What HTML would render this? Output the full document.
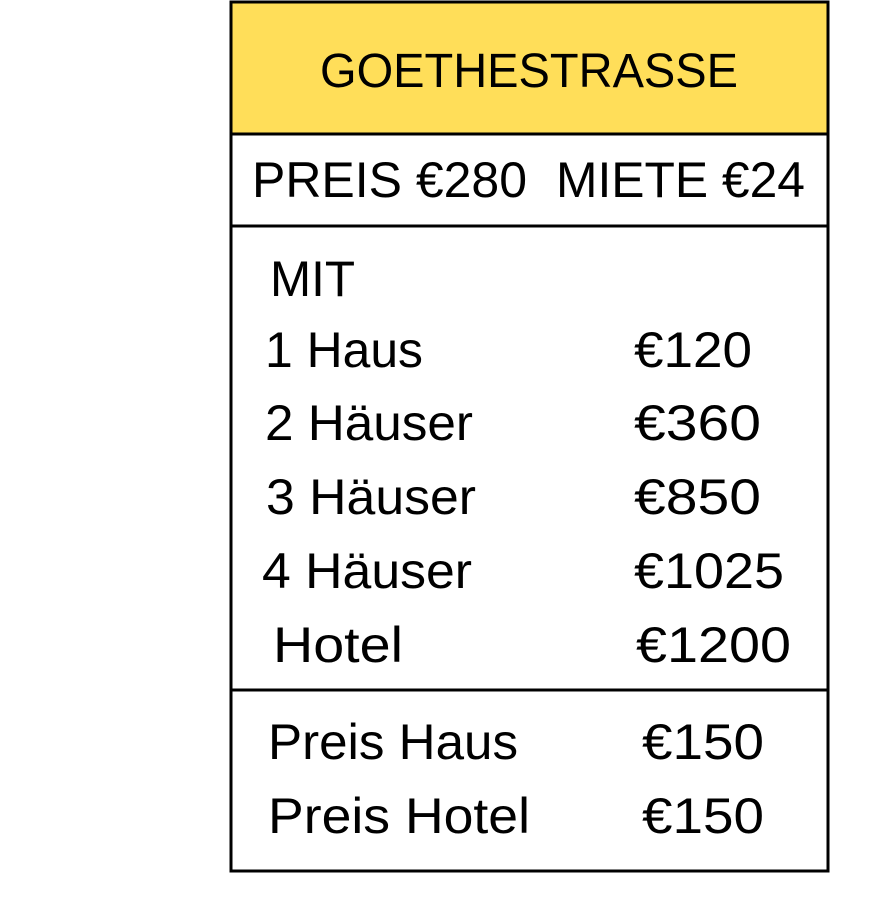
<!DOCTYPE html>
<html><head><style>
html,body{margin:0;padding:0;background:#fff;width:875px;height:919px;overflow:hidden}
svg{display:block}
text{font-family:"Liberation Sans",sans-serif;fill:#000}
</style></head><body>
<svg width="875" height="919" viewBox="0 0 875 919">
<rect x="231" y="2" width="597" height="131" fill="#FFDE59"/>
<rect x="231" y="2" width="597" height="869" fill="none" stroke="#000" stroke-width="3"/>
<line x1="231" y1="134" x2="828" y2="134" stroke="#000" stroke-width="3"/>
<line x1="231" y1="226" x2="828" y2="226" stroke="#000" stroke-width="3"/>
<line x1="231" y1="690" x2="828" y2="690" stroke="#000" stroke-width="3"/>
<g font-size="48">
<text x="320" y="87" textLength="418" lengthAdjust="spacingAndGlyphs">GOETHESTRASSE</text>
</g>
<g font-size="50">
<text x="252" y="197" textLength="275" lengthAdjust="spacingAndGlyphs">PREIS €280</text>
<text x="556" y="197" textLength="249" lengthAdjust="spacingAndGlyphs">MIETE €24</text>
<text x="270" y="296" textLength="85" lengthAdjust="spacingAndGlyphs">MIT</text>
<text x="265" y="367" textLength="158" lengthAdjust="spacingAndGlyphs">1 Haus</text>
<text x="634" y="367" textLength="118" lengthAdjust="spacingAndGlyphs">€120</text>
<text x="265" y="440" textLength="208" lengthAdjust="spacingAndGlyphs">2 Häuser</text>
<text x="634" y="440" textLength="127" lengthAdjust="spacingAndGlyphs">€360</text>
<text x="266" y="514" textLength="210" lengthAdjust="spacingAndGlyphs">3 Häuser</text>
<text x="634" y="514" textLength="127" lengthAdjust="spacingAndGlyphs">€850</text>
<text x="262" y="588" textLength="210" lengthAdjust="spacingAndGlyphs">4 Häuser</text>
<text x="634" y="588" textLength="150" lengthAdjust="spacingAndGlyphs">€1025</text>
<text x="273" y="662" textLength="130" lengthAdjust="spacingAndGlyphs">Hotel</text>
<text x="636" y="662" textLength="155" lengthAdjust="spacingAndGlyphs">€1200</text>
<text x="268" y="759" textLength="250" lengthAdjust="spacingAndGlyphs">Preis Haus</text>
<text x="642" y="759" textLength="122" lengthAdjust="spacingAndGlyphs">€150</text>
<text x="268" y="833" textLength="262" lengthAdjust="spacingAndGlyphs">Preis Hotel</text>
<text x="642" y="833" textLength="122" lengthAdjust="spacingAndGlyphs">€150</text>
</g>
</svg>
</body></html>
